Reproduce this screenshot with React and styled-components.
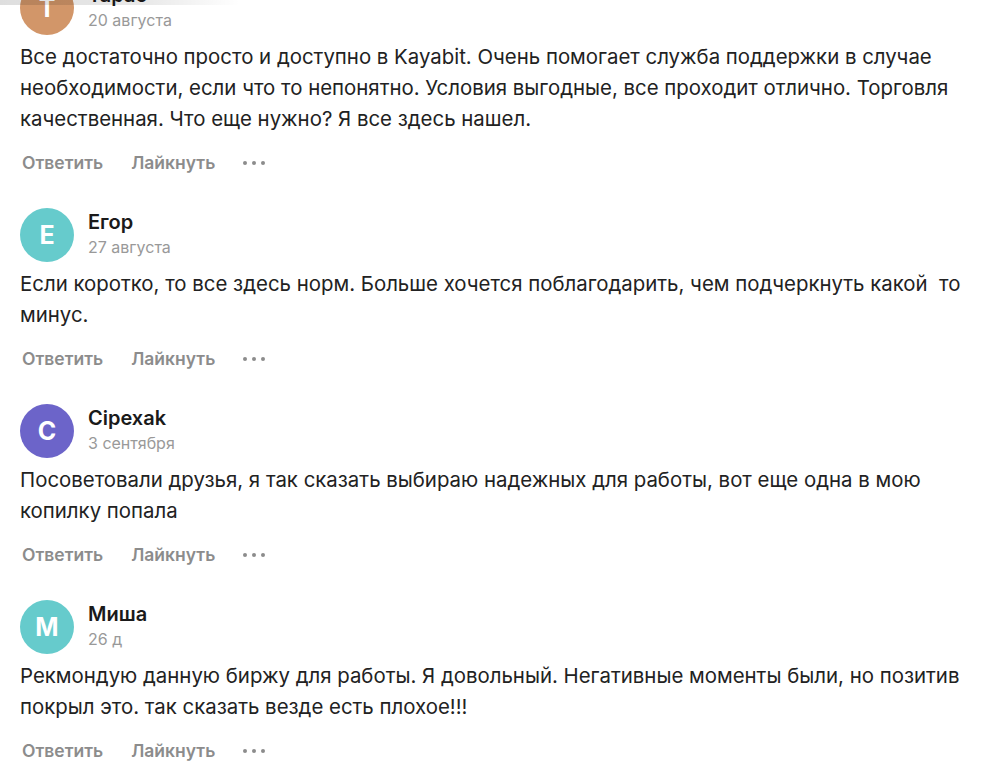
import React from "react"
import styled, { createGlobalStyle } from "styled-components"

const GlobalStyle = createGlobalStyle`
  html, body {
    margin: 0;
    padding: 0;
    background: #fff;
  }
  body {
    font-family: Inter, "Noto Sans", "Liberation Sans", sans-serif;
    color: #222;
    overflow: hidden;
  }
`

const Page = styled.div`
  position: relative;
  width: 986px;
  height: 768px;
  overflow: hidden;
`

const TopShade = styled.div`
  position: absolute;
  top: 0;
  left: 0;
  width: 240px;
  height: 5px;
  background: linear-gradient(to right, rgba(0, 0, 0, 0.13), rgba(0, 0, 0, 0.09) 60%, rgba(0, 0, 0, 0));
  z-index: 5;
`

const List = styled.div`
  display: flex;
  flex-direction: column;
  gap: 34px;
  padding: 0 0 0 20px;
  margin-top: -19px;
`

const Comment = styled.article`
  display: flex;
  flex-direction: column;
`

const Header = styled.div`
  display: flex;
  align-items: flex-start;
  gap: 14px;
`

const Avatar = styled.div`
  width: 54px;
  height: 54px;
  flex: none;
  border-radius: 50%;
  background: ${p => p.$color};
  color: #fff;
  display: flex;
  align-items: center;
  justify-content: center;
  font-size: 25px;
  font-weight: 700;
`

const Meta = styled.div`
  display: flex;
  flex-direction: column;
  gap: 3px;
  padding-top: 2px;
`

const Name = styled.div`
  font-size: 20px;
  line-height: 24px;
  font-weight: 600;
  color: #1a1a1a;
`

const DateText = styled.div`
  font-size: 16px;
  line-height: 20px;
  color: #999;
`

const Body = styled.p`
  margin: 6px 0 0;
  font-size: 20.4px;
  line-height: 31px;
  color: #222;
  white-space: pre-wrap;
`

const Actions = styled.div`
  display: flex;
  align-items: center;
  gap: 28px;
  margin-top: 18px;
  padding-left: 2px;
`

const Action = styled.button`
  border: none;
  background: none;
  padding: 0;
  font-family: inherit;
  font-size: 17.5px;
  line-height: 22px;
  font-weight: 600;
  color: #8c8c8c;
  cursor: pointer;
`

const More = styled.button`
  border: none;
  background: none;
  padding: 0;
  display: flex;
  gap: 5px;
  cursor: pointer;
`

const Dot = styled.span`
  width: 4px;
  height: 4px;
  border-radius: 50%;
  background: #8c8c8c;
`

const comments = [
  {
    letter: "Т",
    color: "#d29669",
    name: "Тарас",
    date: "20 августа",
    text: "Все достаточно просто и доступно в Kayabit. Очень помогает служба поддержки в случае необходимости, если что то непонятно. Условия выгодные, все проходит отлично. Торговля качественная. Что еще нужно? Я все здесь нашел.",
  },
  {
    letter: "Е",
    color: "#66cbcc",
    name: "Егор",
    date: "27 августа",
    text: "Если коротко, то все здесь норм. Больше хочется поблагодарить, чем подчеркнуть какой  то минус.",
  },
  {
    letter: "C",
    color: "#6c64c9",
    name: "Cipexak",
    date: "3 сентября",
    text: "Посоветовали друзья, я так сказать выбираю надежных для работы, вот еще одна в мою копилку попала",
  },
  {
    letter: "М",
    color: "#66cbcc",
    name: "Миша",
    date: "26 д",
    text: "Рекмондую данную биржу для работы. Я довольный. Негативные моменты были, но позитив покрыл это. так сказать везде есть плохое!!!",
  },
]

export default function App() {
  return (
    <Page>
      <GlobalStyle />
      <TopShade />
      <List>
        {comments.map((c, i) => (
          <Comment key={i}>
            <Header>
              <Avatar $color={c.color}>{c.letter}</Avatar>
              <Meta>
                <Name>{c.name}</Name>
                <DateText>{c.date}</DateText>
              </Meta>
            </Header>
            <Body>{c.text}</Body>
            <Actions>
              <Action>Ответить</Action>
              <Action>Лайкнуть</Action>
              <More aria-label="Ещё">
                <Dot />
                <Dot />
                <Dot />
              </More>
            </Actions>
          </Comment>
        ))}
      </List>
    </Page>
  )
}
